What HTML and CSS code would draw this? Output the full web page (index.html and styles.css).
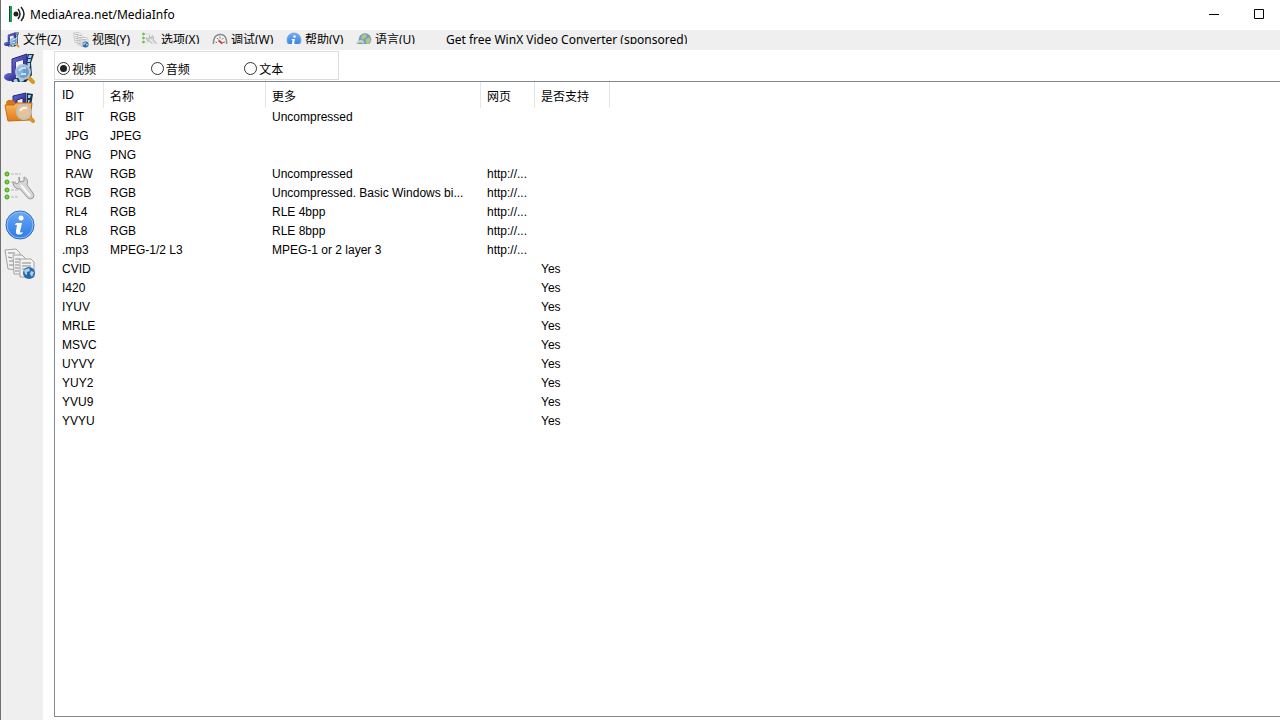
FILE: index.html
```html
<!DOCTYPE html>
<html lang="zh-CN">
<head>
    <meta charset="UTF-8">
    <meta name="viewport" content="width=device-width, initial-scale=1.0">
    <title>MediaArea.net/MediaInfo</title>
    <link rel="stylesheet" href="styles.css">
</head>
<body>
    <!-- Icons used by both the menu and the toolbar -->
    <svg class="sprite" aria-hidden="true">
        <defs>
            <linearGradient id="blue" x1="0" y1="0" x2="0" y2="1">
                <stop offset="0" stop-color="#6aaaf2"/>
                <stop offset="1" stop-color="#2c7ae6"/>
            </linearGradient>
            <linearGradient id="orange" x1="0" y1="0" x2="0" y2="1">
                <stop offset="0" stop-color="#fbb967"/>
                <stop offset="1" stop-color="#e07a14"/>
            </linearGradient>
            <linearGradient id="note" x1="0" y1="0" x2="1" y2="1">
                <stop offset="0" stop-color="#6f70dc"/>
                <stop offset="1" stop-color="#24247e"/>
            </linearGradient>
        </defs>
        <symbol id="icon-file" viewBox="0 0 32 32">
            <path d="M24 1l6 0-3 9 1 12-6 7-14 0-2-4 9-1 5-8z" fill="#1b3147"/>
            <path d="M25 2l3 0-1 3-3 0zM24 6l3 0-1 3-3 0zM23 10l3 0 0 4-3 0zM9 26l4 0 1 3-4 0zM15 26l4-1 1 3-4 1z" fill="#9fd2f4"/>
            <path d="M8 6L23 1l0 17-4 2 0-13-7 2 0 14-4 1z" fill="url(#note)" stroke="#26267c"/>
            <path d="M12 9l7-2v15l-7 3z" fill="#f2f4fa"/>
            <ellipse cx="6" cy="24" rx="6" ry="4" fill="url(#note)"/>
            <path d="M25 25l4 4" stroke="#d99526" stroke-width="4" stroke-linecap="round"/>
            <circle cx="19" cy="19" r="7" fill="#75a9dc" fill-opacity=".9" stroke="#b3c3d2" stroke-width="2"/>
            <path d="M15 18q2-4 7-3M17 21h5" fill="none" stroke="#c4e2fa" stroke-width="2"/>
        </symbol>
        <symbol id="icon-folder" viewBox="0 0 32 32">
            <path d="M23 1l6 1-2 12-4 0z" fill="#1b3147"/>
            <path d="M24 3l3 0-1 3-2 0zM24 8l2 0-1 3-1 0z" fill="#9fd2f4"/>
            <path d="M9 4L22 1l0 11-3 0 0-6-6 2 0 4-4 0z" fill="url(#note)" stroke="#26267c"/>
            <path d="M2 10l2-2 5 0 2 3 17 0 0 16-24 1z" fill="#d5771c"/>
            <path d="M1 13l9 0 2-2 16 0-2 17-22 1z" fill="url(#orange)" stroke="#c86a10"/>
            <path d="M26 26l3 3" stroke="#d99526" stroke-width="4" stroke-linecap="round"/>
            <circle cx="20" cy="20" r="7" fill="#e6c8a2" fill-opacity=".9" stroke="#bfc3c6" stroke-width="2"/>
            <path d="M16 19q2-4 7-3" fill="none" stroke="#fff1dd" stroke-width="2"/>
        </symbol>
        <symbol id="icon-options" viewBox="0 0 32 32">
            <path d="M7 4h10M7 12h5M7 20h8M7 27h8" stroke="#d2d2d2" stroke-width="2" stroke-dasharray="3 1"/>
            <g fill="#7ad43c" stroke="#439b18">
                <circle cx="3" cy="4" r="2"/><circle cx="3" cy="12" r="2"/><circle cx="3" cy="20" r="2"/><circle cx="3" cy="27" r="2"/>
            </g>
            <path d="M15 7l1 5 4-1 0-4q5 2 3 8l6 8q2 3 0 5-3 2-5 0l-8-9q-7 0-7-7l4 2 2-2z" fill="#d6d6d6" stroke="#979797"/>
            <path d="M17 15l9 11" stroke="#fafafa" stroke-width="2"/>
        </symbol>
        <symbol id="icon-info" viewBox="0 0 32 32">
            <circle cx="16" cy="16" r="14" fill="url(#blue)" stroke="#2a62b5"/>
            <circle cx="16" cy="16" r="13" fill="none" stroke="#8fc0f7"/>
            <circle cx="17" cy="9" r="2.500" fill="#fff"/>
            <path d="M12 14h6l-2 9q0 1 3 0l-1 2q-7 2-6-3l1-6h-2z" fill="#fff"/>
        </symbol>
        <symbol id="icon-view" viewBox="0 0 32 32">
            <g fill="#f2f2f2" stroke="#a2a2a2">
                <path d="M1 2l11-1 4 4-1 17-11-1z"/>
                <path d="M9 7l9 0 4 4 0 15-12 0z"/>
                <path d="M16 11l11 0 3 3 0 15-14 0z"/>
            </g>
            <path d="M4 5l7 0M4 9l4 1M5 13l4 0M5 17l4 0M11 11l5 0M11 14l4 0M11 17l4 0M11 20l4 0M11 23l4 0M18 15h9M18 18h9M18 21h5" stroke="#888"/>
            <circle cx="25" cy="25" r="6" fill="#2869ac"/>
            <path d="M20 22l5-2 1 3-3 1 0 3-2-1zM27 23l3 1-2 5-2-3z" fill="#a9d3ec"/>
        </symbol>
        <symbol id="icon-debug" viewBox="0 0 32 32">
            <path d="M3 28Q1 6 16 5T29 28z" fill="#f4f4f4" stroke="#8b8b8b" stroke-width="3"/>
            <path d="M7 20l3 1M10 12l3 3M16 9v4M23 12l-3 3M26 20l-4 1" stroke="#666" stroke-width="2"/>
            <path d="M13 17l8 6" stroke="#d53434" stroke-width="4"/>
        </symbol>
        <symbol id="icon-language" viewBox="0 0 32 32">
            <circle cx="18" cy="15" r="12" fill="#6f9ec6" stroke="#7b9091"/>
            <path d="M11 8l6-4 5 3-4 6-7 2zM19 15l8-5 2 7-4 8-5-3z" fill="#b5c77c"/>
            <path d="M1 25q-1-8 6-8 4-3 8 1l2 8z" fill="#c3d0d8"/>
            <path d="M1 25q6-6 15-1l0 5-15 0z" fill="#6aa765"/>
        </symbol>
    </svg>

    <div class="window">
        <header class="titlebar">
            <svg class="logo" viewBox="0 0 18 18" aria-hidden="true">
                <path d="M.5 1v16" stroke="#1c3c60"/>
                <path d="M2 1v16" stroke="#18a348" stroke-width="2"/>
                <circle cx="7" cy="9" r="2.500" fill="#222"/>
                <path d="M9 4q4 5 0 10M12 2q6 7 0 14" fill="none" stroke="#222" stroke-width="1.500"/>
            </svg>
            <h1>MediaArea.net/MediaInfo</h1>
            <div class="window-buttons">
                <button type="button" aria-label="最小化"><svg viewBox="0 0 10 10"><path d="M0 5.500h10"/></svg></button>
                <button type="button" aria-label="最大化"><svg viewBox="0 0 10 10"><path d="M.5.500h9v9h-9z"/></svg></button>
            </div>
        </header>

        <nav class="menubar">
            <button type="button"><svg><use href="#icon-file"/></svg><span>文件(Z)</span></button>
            <button type="button"><svg><use href="#icon-view"/></svg><span>视图(Y)</span></button>
            <button type="button" class="cut"><svg><use href="#icon-options"/></svg><span>选项(X)</span></button>
            <button type="button" class="cut"><svg><use href="#icon-debug"/></svg><span>调试(W)</span></button>
            <button type="button" class="cut"><svg><use href="#icon-info"/></svg><span>帮助(V)</span></button>
            <button type="button" class="cut"><svg><use href="#icon-language"/></svg><span>语言(U)</span></button>
            <button type="button" class="cut"><span>Get free WinX Video Converter (sponsored)</span></button>
        </nav>

        <div class="body">
            <aside class="toolbar">
                <button type="button" aria-label="打开文件"><svg><use href="#icon-file"/></svg></button>
                <button type="button" aria-label="打开文件夹"><svg><use href="#icon-folder"/></svg></button>
                <div class="separator"></div>
                <button type="button" aria-label="选项"><svg><use href="#icon-options"/></svg></button>
                <button type="button" aria-label="关于"><svg><use href="#icon-info"/></svg></button>
                <button type="button" aria-label="视图"><svg><use href="#icon-view"/></svg></button>
            </aside>

            <main>
                <form class="kinds">
                    <label><input type="radio" name="kind" value="video" checked>视频</label>
                    <label><input type="radio" name="kind" value="audio">音频</label>
                    <label><input type="radio" name="kind" value="text">文本</label>
                </form>

                <div class="list">
                    <table>
                        <colgroup>
                            <col class="col-id"><col class="col-name"><col class="col-more"><col class="col-web"><col class="col-support">
                        </colgroup>
                        <thead>
                            <tr><th>ID</th><th>名称</th><th>更多</th><th>网页</th><th>是否支持</th></tr>
                        </thead>
                        <tbody>
                            <tr><td>&nbsp;BIT</td><td>RGB</td><td>Uncompressed</td><td></td><td></td></tr>
                            <tr><td>&nbsp;JPG</td><td>JPEG</td><td></td><td></td><td></td></tr>
                            <tr><td>&nbsp;PNG</td><td>PNG</td><td></td><td></td><td></td></tr>
                            <tr><td>&nbsp;RAW</td><td>RGB</td><td>Uncompressed</td><td>http://...</td><td></td></tr>
                            <tr><td>&nbsp;RGB</td><td>RGB</td><td>Uncompressed. Basic Windows bi...</td><td>http://...</td><td></td></tr>
                            <tr><td>&nbsp;RL4</td><td>RGB</td><td>RLE 4bpp</td><td>http://...</td><td></td></tr>
                            <tr><td>&nbsp;RL8</td><td>RGB</td><td>RLE 8bpp</td><td>http://...</td><td></td></tr>
                            <tr><td>.mp3</td><td>MPEG-1/2 L3</td><td>MPEG-1 or 2 layer 3</td><td>http://...</td><td></td></tr>
                            <tr><td>CVID</td><td></td><td></td><td></td><td>Yes</td></tr>
                            <tr><td>I420</td><td></td><td></td><td></td><td>Yes</td></tr>
                            <tr><td>IYUV</td><td></td><td></td><td></td><td>Yes</td></tr>
                            <tr><td>MRLE</td><td></td><td></td><td></td><td>Yes</td></tr>
                            <tr><td>MSVC</td><td></td><td></td><td></td><td>Yes</td></tr>
                            <tr><td>UYVY</td><td></td><td></td><td></td><td>Yes</td></tr>
                            <tr><td>YUY2</td><td></td><td></td><td></td><td>Yes</td></tr>
                            <tr><td>YVU9</td><td></td><td></td><td></td><td>Yes</td></tr>
                            <tr><td>YVYU</td><td></td><td></td><td></td><td>Yes</td></tr>
                        </tbody>
                    </table>
                </div>
            </main>
        </div>
    </div>
</body>
</html>
```
FILE: styles.css
```css
* {
    box-sizing: border-box;
}
body {
    margin: 0;
    background: white;
    color: black;
    font-family: "Liberation Sans", "Noto Sans CJK SC", sans-serif;
    font-size: 12px;
}
button {
    padding: 0;
    border: none;
    background: none;
    color: inherit;
    font: inherit;
}
svg {
    display: block;
    flex: none;
}
.sprite {
    position: absolute;
    width: 0;
    height: 0;
}
.window {
    display: flex;
    flex-direction: column;
    min-height: 100vh;
    border-left: 1px solid #707070;
}

/* title bar */
.titlebar {
    display: flex;
    align-items: center;
    height: 30px;
    padding: 0 0 2px 8px;
}
.logo {
    width: 18px;
    height: 18px;
}
.titlebar h1 {
    flex: 1;
    margin: 0 0 0 3px;
    font-family: "Noto Sans", sans-serif;
    font-size: 12px;
    font-weight: normal;
}
.window-buttons {
    display: flex;
    gap: 3px;
}
.window-buttons button {
    display: flex;
    align-items: center;
    justify-content: center;
    width: 42px;
    height: 28px;
}
.window-buttons svg {
    width: 10px;
    height: 10px;
    fill: none;
    stroke: black;
}

/* menu */
.menubar {
    display: grid;
    grid-template-columns: 69px 69px 70px 74px 70px 90px auto;
    justify-content: start;
    align-items: start;
    height: 20px;
    padding-left: 3px;
    background: #efefef;
    font-family: "Noto Sans", "Noto Sans CJK SC", sans-serif;
}
.menubar button {
    display: flex;
    gap: 3px;
    height: 20px;
    padding-top: 2px;
    white-space: nowrap;
}
.menubar svg {
    width: 16px;
    height: 16px;
}
.menubar span {
    line-height: 16px;
}
.menubar .cut {
    height: 14px;
    overflow: hidden;
}

/* toolbar and content */
.body {
    display: flex;
    flex: 1;
}
.toolbar {
    display: flex;
    flex-direction: column;
    gap: 7px;
    width: 42px;
    padding: 3px;
    background: #efefef;
}
.toolbar svg,
.toolbar .separator {
    width: 32px;
    height: 32px;
}
main {
    display: flex;
    flex: 1;
    flex-direction: column;
    gap: 1px;
    padding: 1px 0 3px 11px;
}
.kinds {
    display: flex;
    width: 285px;
    height: 29px;
    padding: 6px 0 0 2px;
    border: 1px solid #dcdcdc;
}
.kinds label {
    display: flex;
    flex: 1;
    align-items: center;
    gap: 2px;
}
.kinds input {
    display: grid;
    place-items: center;
    width: 13px;
    height: 13px;
    margin: 0;
    border: 1px solid #333;
    border-radius: 50%;
    background: white;
    appearance: none;
}
.kinds input:checked::before {
    content: "";
    width: 7px;
    height: 7px;
    border-radius: 50%;
    background: #222;
}
.list {
    flex: 1;
    border: 1px solid #828790;
    border-right: none;
}
table {
    border-spacing: 0;
    table-layout: fixed;
    width: 555px;
}
.col-id {
    width: 49px;
}
.col-name {
    width: 162px;
}
.col-more {
    width: 215px;
}
.col-web {
    width: 54px;
}
.col-support {
    width: 75px;
}
th,
td {
    padding: 0 0 0 6px;
    text-align: left;
    font-weight: normal;
    white-space: nowrap;
}
th:first-child,
td:first-child {
    padding-left: 7px;
}
th {
    height: 26px;
    border-right: 1px solid #e5e5e5;
}
td {
    height: 19px;
    line-height: 19px;
}
```
